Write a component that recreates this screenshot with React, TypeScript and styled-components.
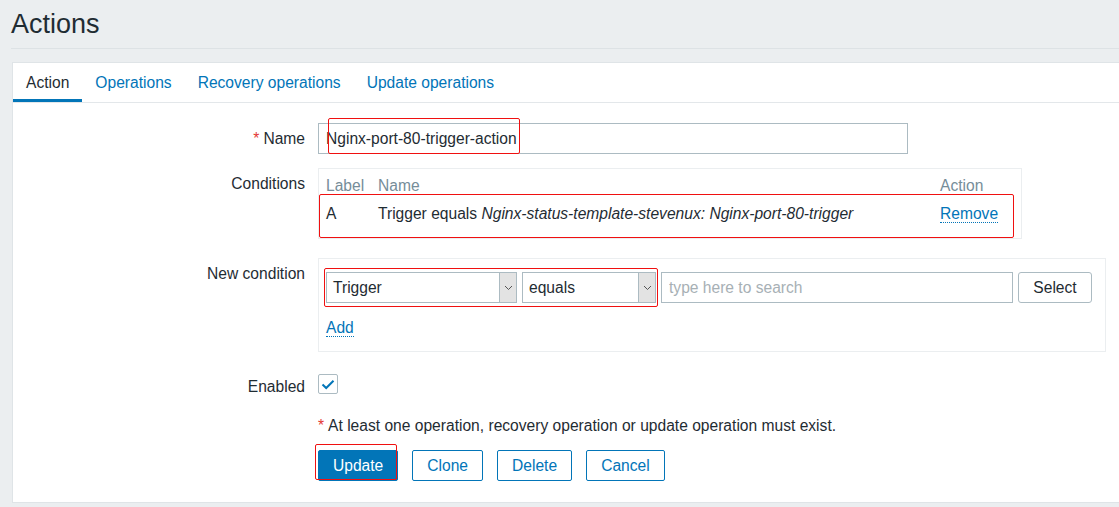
import React from "react";
import styled, { createGlobalStyle } from "styled-components";

const FS = "15.6px";

const GlobalStyle = createGlobalStyle`
  html, body { margin: 0; padding: 0; }
  body {
    background: #ebeef0;
    font-family: "Liberation Sans", Arial, sans-serif;
    color: #1f2c33;
    font-size: ${FS};
  }
  * { box-sizing: border-box; }
`;

const BLUE = "#0275b8";
const BORDER = "#acbbc2";

const Page = styled.div`
  position: relative;
  width: 1119px;
  height: 507px;
  overflow: hidden;
  padding-left: 11px;
`;

const Header = styled.header`
  height: 49px;
  border-bottom: 1px solid #dde2e5;
  display: flex;
  align-items: flex-start;
`;

const Title = styled.h1`
  margin: 0;
  padding-top: 8px;
  font-size: 27px;
  font-weight: normal;
  line-height: 32px;
  color: #1f2c33;
`;

const Panel = styled.section`
  margin-top: 13px;
  margin-left: 1px;
  background: #fff;
  border: 1px solid #dfe4e7;
  border-right: none;
  padding-bottom: 21px;
`;

const TabBar = styled.nav`
  display: flex;
  height: 40px;
  border-bottom: 1px solid #e3e7ea;
`;

const Tab = styled.a<{ $active?: boolean }>`
  display: block;
  padding: 1px 13px 0;
  line-height: 37px;
  font-size: ${FS};
  color: ${(p) => (p.$active ? "#1f2c33" : BLUE)};
  border-bottom: 3px solid ${(p) => (p.$active ? BLUE : "transparent")};
  cursor: pointer;
`;

const Form = styled.div`
  display: grid;
  grid-template-columns: 292px 1fr;
  column-gap: 13px;
  padding-top: 20px;
`;

const Label = styled.div<{ $mt?: number }>`
  text-align: right;
  line-height: 31px;
  margin-top: ${(p) => p.$mt ?? 0}px;
  white-space: nowrap;
`;

const Field = styled.div<{ $mt?: number }>`
  margin-top: ${(p) => p.$mt ?? 0}px;
  display: flex;
  align-items: flex-start;
  min-height: 31px;
`;

const Star = styled.span`
  color: #e33734;
  margin-right: 4px;
`;

const TextInput = styled.input<{ $w: number }>`
  width: ${(p) => p.$w}px;
  height: 31px;
  border: 1px solid ${BORDER};
  padding: 0 7px;
  font-family: inherit;
  font-size: ${FS};
  color: #1f2c33;
  background: #fff;
  outline: none;
  &::placeholder { color: #a7b0b5; }
`;

const Box = styled.div<{ $w: number }>`
  width: ${(p) => p.$w}px;
  border: 1px solid #ebeef0;
`;

const CondBox = styled(Box)`
  padding: 4px 7px 8px;
`;

const Table = styled.table`
  width: 100%;
  border-collapse: collapse;
  font-size: ${FS};
`;

const Th = styled.th<{ $w?: number }>`
  text-align: left;
  font-weight: normal;
  color: #768d99;
  height: 25px;
  padding: 0;
  width: ${(p) => (p.$w ? `${p.$w}px` : "auto")};
`;

const Td = styled.td`
  height: 32px;
  padding: 0;
  white-space: nowrap;
`;

const Link = styled.a`
  color: ${BLUE};
  border-bottom: 1px dotted ${BLUE};
  cursor: pointer;
  line-height: 17px;
  display: inline-block;
`;

const NewCondBox = styled(Box)`
  padding: 13px 7px 13px;
`;

const ControlRow = styled.div`
  display: flex;
  gap: 5px;
  align-items: center;
`;

const SelectWrap = styled.div<{ $w: number }>`
  width: ${(p) => p.$w}px;
  height: 31px;
  border: 1px solid ${BORDER};
  display: flex;
  align-items: stretch;
  background: #fff;
`;

const SelectText = styled.span`
  flex: 1;
  padding: 0 6px;
  line-height: 29px;
`;

const SelectArrow = styled.span`
  width: 17px;
  background: #e3e3e3;
  border-left: 1px solid ${BORDER};
  display: flex;
  align-items: center;
  justify-content: center;
`;

const GrayButton = styled.button`
  height: 31px;
  width: 74px;
  border: 1px solid ${BORDER};
  border-radius: 3px;
  background: #fff;
  font-family: inherit;
  font-size: ${FS};
  color: #1f2c33;
`;

const AddLine = styled.div`
  margin-top: 15px;
  line-height: 20px;
`;

const Checkbox = styled.span`
  width: 20px;
  height: 20px;
  margin-top: 3px;
  border: 1px solid ${BORDER};
  border-radius: 2px;
  display: flex;
  align-items: center;
  justify-content: center;
  background: #fff;
`;

const Note = styled.div`
  line-height: 31px;
  white-space: nowrap;
`;

const Buttons = styled.div`
  display: flex;
  gap: 14px;
`;

const Btn = styled.button<{ $primary?: boolean }>`
  height: 31px;
  padding: 0 14px;
  border: 1px solid ${BLUE};
  border-radius: 2px;
  background: ${(p) => (p.$primary ? BLUE : "#fff")};
  color: ${(p) => (p.$primary ? "#fff" : BLUE)};
  font-family: inherit;
  font-size: ${FS};
  cursor: pointer;
`;

const Mark = styled.div<{ $x: number; $y: number; $w: number; $h: number }>`
  position: absolute;
  left: ${(p) => p.$x}px;
  top: ${(p) => p.$y}px;
  width: ${(p) => p.$w}px;
  height: ${(p) => p.$h}px;
  border: 1px solid #f01010;
  border-radius: 2px;
  pointer-events: none;
`;

const Chevron = () => (
  <svg width="9" height="6" viewBox="0 0 9 6">
    <path d="M1 1 L4.5 4.5 L8 1" fill="none" stroke="#555" strokeWidth="1" />
  </svg>
);

const Select = ({ w, value }: { w: number; value: string }) => (
  <SelectWrap $w={w}>
    <SelectText>{value}</SelectText>
    <SelectArrow>
      <Chevron />
    </SelectArrow>
  </SelectWrap>
);

export default function App() {
  return (
    <>
      <GlobalStyle />
      <Page>
        <Header>
          <Title>Actions</Title>
        </Header>
        <Panel>
          <TabBar>
            <Tab $active>Action</Tab>
            <Tab>Operations</Tab>
            <Tab>Recovery operations</Tab>
            <Tab>Update operations</Tab>
          </TabBar>
          <Form>
            <Label>
              <Star>*</Star>Name
            </Label>
            <Field>
              <TextInput $w={590} defaultValue="Nginx-port-80-trigger-action" />
            </Field>

            <Label $mt={14}>Conditions</Label>
            <Field $mt={14}>
              <CondBox $w={704}>
                <Table>
                  <thead>
                    <tr>
                      <Th $w={52}>Label</Th>
                      <Th>Name</Th>
                      <Th $w={74}>Action</Th>
                    </tr>
                  </thead>
                  <tbody>
                    <tr>
                      <Td>A</Td>
                      <Td>
                        Trigger equals{" "}
                        <i>Nginx-status-template-stevenux: Nginx-port-80-trigger</i>
                      </Td>
                      <Td>
                        <Link>Remove</Link>
                      </Td>
                    </tr>
                  </tbody>
                </Table>
              </CondBox>
            </Field>

            <Label $mt={19}>New condition</Label>
            <Field $mt={19}>
              <NewCondBox $w={788}>
                <ControlRow>
                  <Select w={191} value="Trigger" />
                  <Select w={134} value="equals" />
                  <TextInput $w={352} placeholder="type here to search" />
                  <GrayButton>Select</GrayButton>
                </ControlRow>
                <AddLine>
                  <Link>Add</Link>
                </AddLine>
              </NewCondBox>
            </Field>

            <Label $mt={19}>Enabled</Label>
            <Field $mt={19}>
              <Checkbox>
                <svg width="14" height="11" viewBox="0 0 14 11">
                  <path d="M1.5 5.5 L5.2 9 L12.5 1.8" fill="none" stroke={BLUE} strokeWidth="2" />
                </svg>
              </Checkbox>
            </Field>

            <div />
            <Field $mt={8}>
              <Note>
                <Star>*</Star>At least one operation, recovery operation or update operation must exist.
              </Note>
            </Field>

            <div />
            <Field $mt={9}>
              <Buttons>
                <Btn $primary>Update</Btn>
                <Btn>Clone</Btn>
                <Btn>Delete</Btn>
                <Btn>Cancel</Btn>
              </Buttons>
            </Field>
          </Form>
        </Panel>
        <Mark $x={328} $y={118} $w={192} $h={36} />
        <Mark $x={319} $y={194} $w={695} $h={44} />
        <Mark $x={324} $y={268} $w={334} $h={39} />
        <Mark $x={315} $y={444} $w={82} $h={36} />
      </Page>
    </>
  );
}
